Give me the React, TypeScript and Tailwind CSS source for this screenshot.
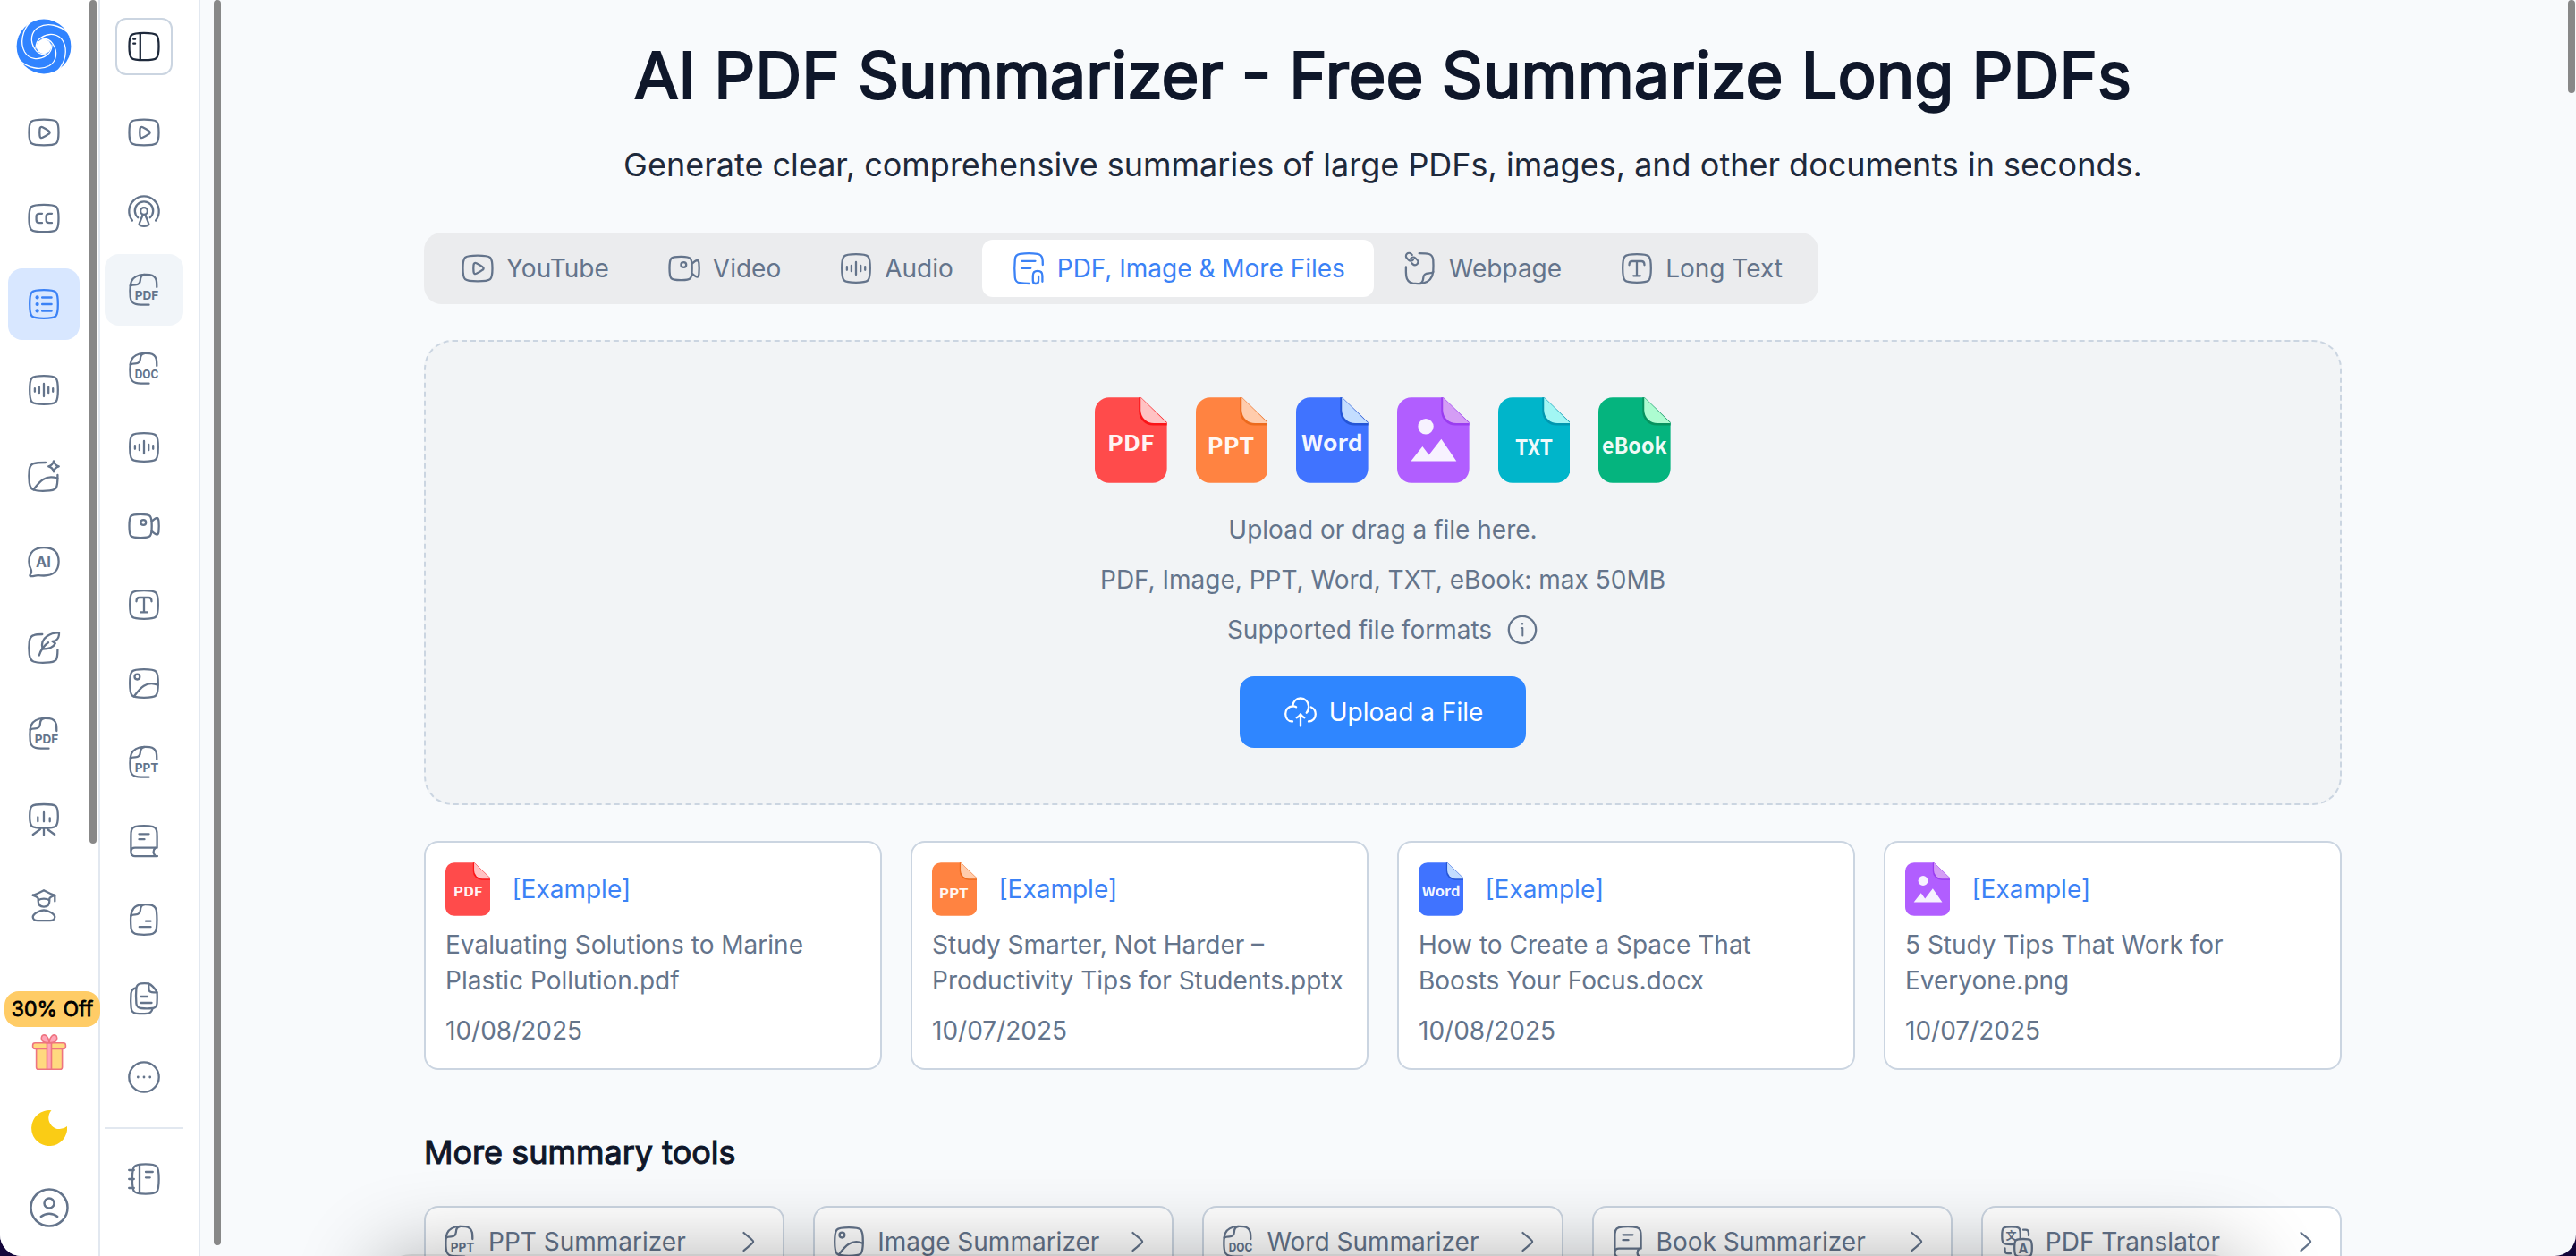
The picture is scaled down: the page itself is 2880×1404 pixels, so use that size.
import type { ReactNode } from 'react';

type IconProps = { className?: string };

// rounded square with softly bulging sides, shared by most of the line icons
const squircle = (l: number, t: number, r: number, b: number) => {
  const mx = (l + r) / 2;
  const my = (t + b) / 2;
  const kx = (r - l) * 0.04;
  const ky = (b - t) * 0.04;
  return `M${l} ${my}C${l} ${t + ky} ${l + kx} ${t} ${mx} ${t}S${r} ${t + ky} ${r} ${my}S${r - kx} ${b} ${mx} ${b}S${l} ${b - ky} ${l} ${my}Z`;
};

function Svg({ className = 'size-10', children }: { className?: string; children: ReactNode }) {
  return (
    <svg
      viewBox="0 0 40 40"
      fill="none"
      stroke="currentColor"
      strokeWidth="2.3"
      strokeLinecap="round"
      strokeLinejoin="round"
      className={`shrink-0 ${className}`}
    >
      {children}
    </svg>
  );
}

function Label({ x, y, size, w, children }: { x: number; y: number; size: number; w: number; children: string }) {
  return (
    <text
      x={x}
      y={y}
      fontSize={size}
      textLength={w}
      lengthAdjust="spacingAndGlyphs"
      stroke="none"
      fill="currentColor"
      className="font-[Inter,sans-serif] font-bold"
    >
      {children}
    </text>
  );
}

const PlayIcon = (p: IconProps) => (
  <Svg {...p}>
    <path d={squircle(3.5, 5.6, 36.5, 34.4)} />
    <path d="M15.5 16.2c.2-2.100 1.400-2.700 3.100-1.900 2.600 1.200 5 2.600 7 4.100 1.400 1 1.400 2.300 0 3.300-2 1.500-4.400 2.900-7 4.100-1.700.8-2.900.1-3.100-1.900-.3-2.500-.3-5.100 0-7.700z" />
  </Svg>
);

const CcIcon = (p: IconProps) => (
  <Svg {...p}>
    <path d={squircle(3.5, 4.8, 36.5, 35.2)} />
    <path d="M18 14.800h-3c-2.200 0-3.400 1.200-3.400 3.400v3.600c0 2.200 1.200 3.400 3.400 3.400h3M29 14.800h-3c-2.200 0-3.400 1.200-3.400 3.400v3.600c0 2.200 1.200 3.400 3.400 3.400h3" />
  </Svg>
);

const ListIcon = (p: IconProps) => (
  <Svg {...p}>
    <path d={squircle(4.2, 4.2, 35.8, 35.8)} />
    <path d="M18.200 12.400H28.500M18.200 20H28.500M18.200 27.400H28.500" strokeWidth="2.5" />
    <g fill="currentColor" stroke="none">
      <circle cx="12.6" cy="12.4" r="2.1" />
      <circle cx="12.6" cy="20" r="2.1" />
      <circle cx="12.6" cy="27.4" r="2.1" />
    </g>
  </Svg>
);

const AudioIcon = (p: IconProps) => (
  <Svg {...p}>
    <path d={squircle(4.2, 4.2, 35.8, 35.8)} />
    <path d="M9.900 18.200v3.600M14.900 16.800v6.400M20 13v14M25.200 16.800v6.400M30.200 18.200v3.600" />
  </Svg>
);

const AiImageIcon = (p: IconProps) => (
  <Svg {...p}>
    <path d="M22 5c-6 0-10.500.1-13.500 1.200C5.500 7.300 4.300 9.500 3.800 13c-.5 4-.5 10.500 0 14.500.5 4.200 1.700 6.800 4.700 8 3 1.100 9 1.400 14 1.200 5-.2 9-.5 11-3 1.900-2.400 2-7.500 1.900-14.700" />
    <path d="M8.500 35.300C14 28 21 17.500 35.300 22.700" />
    <path d="M31 3.300c.8 3.600 2.300 5.200 5.800 6-3.500.8-5 2.400-5.800 6-.8-3.600-2.300-5.200-5.800-6 3.500-.8 5-2.400 5.800-6z" />
  </Svg>
);

const AiChatIcon = (p: IconProps) => (
  <Svg {...p}>
    <path d="M14 35.200c-2.600-.3-5 1.100-8.500.9-1.200-.1-1.400-.9-.8-1.700 1.500-1.900 1.700-4 .8-6.200C4 25.600 3.400 23 3.400 19.800 3.400 9.500 9.500 4.200 20 4.200s16.600 5.300 16.600 15.600c0 10.700-6.600 15.700-16.600 15.700-2.500 0-4.500-.1-6-.3z" />
    <Label x={11} y={26} size={15.5} w={16.8}>AI</Label>
  </Svg>
);

const FeatherIcon = (p: IconProps) => (
  <Svg {...p}>
    <path d="M18.300 5c-4.300 0-7.500.2-9.800 1.200-3 1.100-4.200 3.300-4.700 6.800-.5 4-.5 10.500 0 14.500.5 4.200 1.700 6.800 4.700 8 3 1.100 9 1.400 14 1.200 5-.2 9-.5 11-3 1.500-1.900 1.900-6 1.900-11.500" />
    <path d="M18.600 21.500c-1.700-6 .6-11.300 5.200-14.500C28 4 32.500 3.200 37 3.400c.2 3.700-.8 6.700-3.700 8.500-1.300.8-2.500 1-3.800 1l3.300 2.300c-2.300 4.600-7.500 6.200-14.200 6.300z" />
    <path d="M14.800 28.500c1.900-6 4.700-10.500 10.200-14.300" />
  </Svg>
);

function FileLabelIcon({ label, className }: IconProps & { label: string }) {
  return (
    <Svg className={className}>
      <path d="M34.300 17c0-3.500 0-5.500-.5-7.500-1-4-3.300-6-7.500-6.400-4-.4-8-.3-11.300.4C9 5 5.600 9 4.800 14.500c-.4 3.500-.5 9.500-.1 13.500.5 4.700 2 7 6 7.800 3.500.7 9 .9 14.800.9" />
      <path d="M4.800 15.600c1-1 3-1.200 5.500-1.300 3.700-.1 5.300-1.500 5.500-4.800.2-3.800.9-6.300 4.400-6.500" />
      <Label x={9.8} y={31.4} size={13.8} w={26.5}>{label}</Label>
    </Svg>
  );
}

const PdfIcon = (p: IconProps) => <FileLabelIcon label="PDF" {...p} />;
const DocIcon = (p: IconProps) => <FileLabelIcon label="DOC" {...p} />;
const PptIcon = (p: IconProps) => <FileLabelIcon label="PPT" {...p} />;

const BoardIcon = (p: IconProps) => (
  <Svg {...p}>
    <path d={squircle(4.2, 3, 35.8, 29.7)} />
    <path d="M13.300 17.300v5M20 12v10.300M26.700 18.300v4M16 31l-8.200 6M20 30.500v7M24 31l8.200 6" />
  </Svg>
);

const StudentIcon = (p: IconProps) => (
  <Svg {...p}>
    <path d="M7.700 8.700C12 7.500 16 5.300 20 3.200c4 2.100 8 4.300 12.300 5.500v6.800" />
    <path d="M7.700 8.700c2.300.9 5 1.700 5.800 3.300.4.900.2 2 .2 3 0 4 2.300 6.600 6.300 6.600s6.300-2.600 6.300-6.600c0-1-.2-2.100.2-3 .8-1.600 3.500-2.400 5.800-3.300M13.700 14.200c3.500-2 9.100-2 12.600 0" />
    <path d="M20 25.500c4.500 0 12.300 4 12.300 7.600 0 2.900-3 4.100-5.300 4.100H13c-2.300 0-5.300-1.200-5.300-4.100 0-3.600 7.800-7.600 12.300-7.600z" />
  </Svg>
);

const PanelIcon = (p: IconProps) => (
  <Svg {...p}>
    <path d={squircle(3.5, 4.8, 36.5, 35.2)} />
    <path d="M15.800 5.200v29.600M8.200 11.700h1.900M8.200 16.700h1.900" />
  </Svg>
);

const PodcastIcon = (p: IconProps) => (
  <Svg {...p}>
    <path d="M6.900 30.500a16.700 16.700 0 1 1 26.200 0M13.200 27.200a10.200 10.200 0 1 1 13.600 0" />
    <circle cx="20" cy="20" r="3.9" />
    <path d="M18.300 24.300c-.5 3.300-3 7-3.700 10.500 1.300 2.700 9.500 2.700 10.800 0-.7-3.500-3.200-7.200-3.700-10.500" />
  </Svg>
);

const VideoIcon = (p: IconProps) => (
  <Svg {...p}>
    <path d={squircle(3.5, 6.8, 28.7, 33.2)} />
    <circle cx="19.3" cy="16" r="2.9" />
    <path d="M28.700 14.500c2-1.300 3.400-3.400 5.600-3.500 1.700 0 1.900 1.300 2.100 3.200.4 4 .4 8.100 0 12.100-.2 1.900-.4 3.200-2.100 3.200-2.200-.1-3.600-2.200-5.600-3.500" />
  </Svg>
);

const TextIcon = (p: IconProps) => (
  <Svg {...p}>
    <path d={squircle(4.2, 4.2, 35.8, 35.8)} />
    <path d="M11.500 16.300c0-3 .8-4.300 3.500-4.300h10c2.700 0 3.500 1.300 3.500 4.300M20 12v16.300M16.200 28.300h7.700" />
  </Svg>
);

const ImageIcon = (p: IconProps) => (
  <Svg {...p}>
    <path d={squircle(4.2, 4.2, 35.8, 35.8)} />
    <circle cx="12.4" cy="12.6" r="2.9" />
    <path d="M8.800 34.500C14.500 27 22 16 35.600 21.800" />
  </Svg>
);

const BookIcon = (p: IconProps) => (
  <Svg {...p}>
    <path d="M5.400 32V14.500c0-6 .5-9.200 4.600-10.400 5-1.400 15-1.400 20 0 4.100 1.200 4.600 4.400 4.600 10.400v13.200H10c-2.800 0-4.600 1.900-4.600 4.600 0 3 2 4.800 4.600 4.800h25" />
    <path d="M32.500 28c-2.600 2.200-2.600 6.500.3 8.800M14.500 12.300h11M14.500 18.200h6" />
  </Svg>
);

const ArticleIcon = (p: IconProps) => (
  <Svg {...p}>
    <path d="M5.400 15c.8-6 3.800-10 9.600-11.300 3.500-.8 7.500-.8 11-.4 5 .5 7.500 2.700 8 7.500.6 6 .6 12.500 0 18.500-.5 4.500-2.500 6.600-7 7.100-4.500.5-9.500.5-14 0-4.500-.5-7-2.600-7.500-7.100-.4-4.500-.6-10-.1-14.300z" />
    <path d="M5.400 15.600c1-1 3-1.200 5-1.300 3.700-.1 5.300-1.500 5.500-4.800.2-3.800.9-6 4.400-6.300M22 21.700h5.500M14.800 28.200h12.700" />
  </Svg>
);

const CopiesIcon = (p: IconProps) => (
  <Svg {...p}>
    <path d="M25 3.400c-3-.3-6-.3-8.500 0-3.300.4-4.700 2-5.100 5.400-.5 5.500-.5 11.500 0 17 .4 3.400 1.900 4.800 5.300 5.200 4.200.5 8.800.5 12.900 0 3.400-.4 4.500-1.900 4.900-5.200.3-4 .4-8.300.1-12.500-2-3.600-5.200-8-9.600-9.900z" />
    <path d="M25.300 3.800c-.1 2.500 0 5 .3 6.700.4 1.700 1.300 2.400 3 2.600 1.800.2 3.800.2 5.700.2M16.500 18h7.500M16.500 25h12M11 8.500c-3.700.5-5.100 2-5.500 6-.4 5-.4 11 .1 16 .4 4.300 2 6 6 6.400 4 .4 8 .4 12 0 3-.3 5-1.700 5.900-5.500" />
  </Svg>
);

const MoreIcon = (p: IconProps) => (
  <Svg {...p}>
    <circle cx="20" cy="20" r="16.7" />
    <g fill="currentColor" stroke="none">
      <circle cx="13.3" cy="20" r="1.4" />
      <circle cx="20" cy="20" r="1.4" />
      <circle cx="26.7" cy="20" r="1.4" />
    </g>
  </Svg>
);

const NotebookIcon = (p: IconProps) => (
  <Svg {...p}>
    <path d={squircle(6.9, 3.4, 36.6, 36.6)} />
    <path d="M15 3.800v32.400M3.200 10h5.600M3.200 20h5.600M3.200 30h5.600M22 12h7.800M22 18.300h4.700" />
  </Svg>
);

const AttachIcon = (p: IconProps) => (
  <Svg {...p}>
    <path d="M35.800 16c0-3 0-5-.4-7-.7-3-2.300-4.700-5.400-5.200-6-.9-13.500-.9-19.500 0C7 4.300 5.200 6 4.800 9.500c-.7 7-.7 14 0 21 .4 3.500 2 5.200 5.200 5.700 3.500.6 7 .8 10.600.8M12.500 11.800h15M12.500 19.800h9.800" />
    <path d="M35.400 34.800v-6.600c0-3.300-2-5.300-5.300-5.300s-5.300 2-5.300 5.300v5.200c0 2.200 1 3.600 3.100 3.600s3.200-1.400 3.200-3.600v-4.600" />
  </Svg>
);

const WebpageIcon = (p: IconProps) => (
  <Svg {...p}>
    <path d="M18.700 3.200c4.800 0 8.500.1 11 .8 3.200 1 4.300 3 4.600 6.700.3 4.500.3 9 0 13-.8 7.300-4.800 11.700-11.600 13-3.500.6-7.700.6-11.200 0-4.500-.9-6.700-3.300-7.300-8-.4-3.500-.4-7-.3-10.300" />
    <path d="M34.300 24c-1 1.200-3 1.300-5 1.500-4.300.3-5.700 1.500-6 5-.3 3-.5 5.500-3.300 6.300" />
    <g transform="translate(18.800 1.400) scale(-.68 .68)" strokeWidth="3.2">
      <path d="M10 13a5 5 0 0 0 7.540.540l3-3a5 5 0 0 0-7.070-7.070l-1.720 1.710" />
      <path d="M14 11a5 5 0 0 0-7.540-.540l-3 3a5 5 0 0 0 7.070 7.070l1.710-1.710" />
    </g>
  </Svg>
);

const TranslateIcon = (p: IconProps) => (
  <Svg {...p}>
    <path d={squircle(3.3, 3.3, 23.8, 23)} />
    <path d={squircle(17.2, 17, 36.8, 36.8)} fill="#f8f8f8" />
    <path d="M27 6.700h2.700c2.400 0 3.300 1.100 3.300 3.600V13M6.500 27.500v2.300c0 2.400 1.100 3.400 3.500 3.400h3" />
    <text x="7.6" y="17.6" fontSize="12" stroke="none" fill="currentColor" className="font-['Noto_Sans_CJK_SC',sans-serif] font-bold">
      文
    </text>
    <Label x={21.5} y={33} size={14.5} w={11}>A</Label>
  </Svg>
);

const CloudUploadIcon = (p: IconProps) => (
  <Svg {...p}>
    <path d="M11 30.500c-5 0-7.800-3.800-7.800-8.500 0-4.600 3-8.400 8-8.600.3-5.200 3.900-8.900 8.800-8.900s8.900 3.800 9.100 9c.1 3-.8 5.500-2.400 7.200" />
    <path d="M11.200 13.400c1.400-.1 2.700.2 3.900.9M31.800 14.500c3.200 1.300 5 4 5 7.700 0 4.500-2.800 8.300-7.800 8.300M20 35.500V22.500M15.700 26.300c1.500-.8 3-2.100 4.300-4 1.300 1.900 2.800 3.200 4.300 4" />
  </Svg>
);

const InfoIcon = (p: IconProps) => (
  <Svg {...p}>
    <circle cx="20" cy="20" r="15.2" />
    <path d="M18.800 18h1.500v8.500" strokeWidth="2" />
    <circle cx="20" cy="13.300" r="1.3" fill="currentColor" stroke="none" />
  </Svg>
);

function Logo() {
  const arm = 'M27-15.500C18-24 4-27-6-21.500-14.500-16.500-16-6-10 3-7 7.500-3 9 2 9';
  return (
    <svg viewBox="-31 -31 62 62" className="size-[62px] shrink-0">
      <circle r="30.4" fill="#3083ff" />
      <g fill="none" stroke="#fff" strokeWidth="1.3" strokeLinecap="round">
        <path d={arm} />
        <path d={arm} transform="rotate(90)" />
        <path d={arm} transform="rotate(180)" />
        <path d={arm} transform="rotate(270)" />
      </g>
      <circle r="8.3" fill="#fff" />
    </svg>
  );
}

const Gift = () => (
  <svg viewBox="0 0 40 40" className="size-10" stroke="#ee7480" strokeWidth="1.6" strokeLinejoin="round">
    <rect x="5.6" y="15.5" width="29" height="23.7" rx="2.3" fill="#ffd97f" />
    <rect x="1.6" y="9.8" width="36.8" height="6.6" rx="2.6" fill="#ffd97f" />
    <rect x="17.5" y="9.8" width="5" height="29.4" fill="#ffa6b9" />
    <path d="M20 9.500c-4 .6-8.500-1-8.700-5C11.200 1 14.500-.2 17 2c1.800 1.700 2.700 4.500 3 7.500z" fill="#ffa6b9" />
    <path d="M20 9.500c4 .6 8.500-1 8.700-5C28.800 1 25.500-.2 23 2c-1.800 1.700-2.700 4.500-3 7.500z" fill="#ffa6b9" />
  </svg>
);

type FileKind = 'pdf' | 'ppt' | 'word' | 'image' | 'txt' | 'ebook';

const fileStyles: Record<FileKind, { base: string; fold: string; edge: string; label?: string; x: number; y: number; w: number }> = {
  pdf: { base: '#ff4b4b', fold: '#ffc2c3', edge: '#fb1418', label: 'PDF', x: 14, y: 60.5, w: 53 },
  ppt: { base: '#ff8341', fold: '#ffccac', edge: '#ec6a1d', label: 'PPT', x: 12.5, y: 63.5, w: 53 },
  word: { base: '#4073ff', fold: '#c3ddff', edge: '#2455d6', label: 'Word', x: 6, y: 60.5, w: 69 },
  image: { base: '#b15eff', fold: '#d49df5', edge: '#9a3df0', x: 0, y: 0, w: 0 },
  txt: { base: '#00b5ca', fold: '#a2f6f4', edge: '#0097b0', label: 'TXT', x: 19.2, y: 65, w: 42 },
  ebook: { base: '#05b47e', fold: '#adfcd1', edge: '#07935f', label: 'eBook', x: 4, y: 63.3, w: 73 },
};

function FileBadge({ kind, className }: { kind: FileKind; className: string }) {
  const s = fileStyles[kind];
  return (
    <svg viewBox="0 0 81 96" className={`shrink-0 ${className}`}>
      <path d="M16 0h35l30 29v51a16 16 0 0 1-16 16H16A16 16 0 0 1 0 80V16A16 16 0 0 1 16 0z" fill={s.base} />
      <path d="M49.500 0H52l29 28v3.500H65.500a16 16 0 0 1-16-16z" fill={s.edge} />
      <path d="M51.500 0 81 29H66.500a15 15 0 0 1-15-15z" fill={s.fold} />
      {s.label ? (
        <text
          x={s.x}
          y={s.y}
          fontSize="24"
          fill="#fff"
          fillOpacity=".95"
          textLength={s.w}
          lengthAdjust="spacingAndGlyphs"
          className="font-['Noto_Sans_CJK_SC',sans-serif] font-bold"
        >
          {s.label}
        </text>
      ) : (
        <g fill="#f7f2ff">
          <circle cx="32.2" cy="32.7" r="8.7" />
          <path d="M15.500 71.500 28.500 55l7.200 9.700 13.900-18 17 24.800z" />
        </g>
      )}
    </svg>
  );
}

const mainNav = [PlayIcon, CcIcon, ListIcon, AudioIcon, AiImageIcon, AiChatIcon, FeatherIcon, PdfIcon, BoardIcon, StudentIcon];

const subNav = [
  PlayIcon,
  PodcastIcon,
  PdfIcon,
  DocIcon,
  AudioIcon,
  VideoIcon,
  TextIcon,
  ImageIcon,
  PptIcon,
  BookIcon,
  ArticleIcon,
  CopiesIcon,
  MoreIcon,
];

const tabs = [
  { name: 'YouTube', Icon: PlayIcon },
  { name: 'Video', Icon: VideoIcon },
  { name: 'Audio', Icon: AudioIcon },
  { name: 'PDF, Image & More Files', Icon: AttachIcon, active: true },
  { name: 'Webpage', Icon: WebpageIcon },
  { name: 'Long Text', Icon: TextIcon },
];

const fileKinds: FileKind[] = ['pdf', 'ppt', 'word', 'image', 'txt', 'ebook'];

const examples: { kind: FileKind; title: string; date: string }[] = [
  { kind: 'pdf', title: 'Evaluating Solutions to Marine Plastic Pollution.pdf', date: '10/08/2025' },
  { kind: 'ppt', title: 'Study Smarter, Not Harder – Productivity Tips for Students.pptx', date: '10/07/2025' },
  { kind: 'word', title: 'How to Create a Space That Boosts Your Focus.docx', date: '10/08/2025' },
  { kind: 'image', title: '5 Study Tips That Work for Everyone.png', date: '10/07/2025' },
];

const tools = [
  { name: 'PPT Summarizer', Icon: PptIcon },
  { name: 'Image Summarizer', Icon: ImageIcon },
  { name: 'Word Summarizer', Icon: DocIcon },
  { name: 'Book Summarizer', Icon: BookIcon },
  { name: 'PDF Translator', Icon: TranslateIcon },
];

function MainSidebar() {
  return (
    <aside className="relative flex w-[112px] shrink-0 flex-col border-r-2 border-[#e2e8f0] bg-white">
      <div className="flex w-[98px] justify-center pt-[21px]">
        <Logo />
      </div>
      <nav className="mt-[25px] flex w-[98px] flex-col items-center gap-4">
        {mainNav.map((Icon, i) => (
          <a
            key={i}
            className={i === 2 ? 'flex size-20 items-center justify-center rounded-2xl bg-[#d8e7ff] text-[#3b82f6]' : 'flex size-20 items-center justify-center rounded-2xl'}
          >
            <Icon />
          </a>
        ))}
      </nav>
      <div className="mt-14 flex flex-col items-center">
        <span className="ml-[5px] flex h-10 w-[107px] items-center justify-center self-start rounded-2xl bg-[#ffcc66] text-[23px] text-black [-webkit-text-stroke:0.8px_currentColor]">
          30% Off
        </span>
        <div className="mt-2">
          <Gift />
        </div>
        <svg viewBox="0 0 40 40" className="mt-[45px] size-10">
          <path d="M22.500.2A20 20 0 1 0 40 18 12.500 12.500 0 0 1 22.500.2z" fill="#facc15" />
        </svg>
        <svg viewBox="0 0 44 44" fill="none" stroke="currentColor" strokeWidth="2.5" strokeLinecap="round" className="mt-[47px] size-11">
          <circle cx="22" cy="22" r="20.5" />
          <circle cx="22" cy="17" r="5.5" />
          <path d="M12.800 32c5.500-4.500 12.900-4.500 18.400 0" />
        </svg>
      </div>
      <div className="absolute top-0 left-[100px] h-[943px] w-2 rounded-full bg-[#888]" />
    </aside>
  );
}

function SubSidebar() {
  return (
    <aside className="flex w-[112px] shrink-0 flex-col border-r-2 border-[#e2e8f0] bg-white">
      <button className="mt-5 ml-[17px] flex size-16 items-center justify-center rounded-xl border-2 border-[#cbd5e1] text-[#1e293b]">
        <PanelIcon />
      </button>
      <nav className="mt-6 ml-[5px] flex w-[88px] flex-col gap-2">
        {subNav.map((Icon, i) => (
          <a key={i} className={i === 2 ? 'flex h-20 items-center justify-center rounded-2xl bg-[#f1f5f9]' : 'flex h-20 items-center justify-center rounded-2xl'}>
            <Icon />
          </a>
        ))}
        <hr className="mt-2 border-t-2 border-[#e2e8f0]" />
        <a className="mt-2 flex h-20 items-center justify-center">
          <NotebookIcon />
        </a>
      </nav>
    </aside>
  );
}

function DropZone() {
  return (
    <section className="mt-10 flex h-[520px] flex-col items-center rounded-[32px] border-2 border-dashed border-[#cbd5e1] bg-[#f2f4f6] pt-[62px]">
      <div className="flex gap-8">
        {fileKinds.map((kind) => (
          <FileBadge key={kind} kind={kind} className="h-24 w-[80.64px]" />
        ))}
      </div>
      <div className="mt-6 flex flex-col items-center leading-[56px]">
        <p>Upload or drag a file here.</p>
        <p>PDF, Image, PPT, Word, TXT, eBook: max 50MB</p>
        <p className="flex items-center gap-[14px] pl-[2px]">
          Supported file formats <InfoIcon />
        </p>
      </div>
      <button className="mt-6 flex h-20 items-center gap-3 rounded-2xl bg-[#2f86ff] px-12 text-white">
        <CloudUploadIcon />
        Upload a File
      </button>
    </section>
  );
}

export default function App() {
  return (
    <div className="h-[1404px] w-[2880px] overflow-hidden bg-[#13063a]">
      <div className="relative flex h-full overflow-hidden rounded-b-3xl bg-[#f8fafc] font-[Inter,sans-serif] text-[28px] text-[#64748b]">
        <MainSidebar />
        <SubSidebar />

        <main className="relative flex-1">
          <div className="ml-[250px] w-[2144px]">
            <h1 className="pt-[39px] text-center text-[72px] leading-[90px] text-[#0f172a] [-webkit-text-stroke:2.2px_currentColor]">
              AI PDF Summarizer - Free Summarize Long PDFs
            </h1>
            <p className="mt-[27px] text-center text-4xl leading-[56px] text-[#1e293b]">
              Generate clear, comprehensive summaries of large PDFs, images, and other documents in seconds.
            </p>

            <div className="mt-12 flex h-20 w-fit rounded-[20px] bg-[#ebecee] p-2">
              {tabs.map(({ name, Icon, active }) => (
                <button
                  key={name}
                  className={active ? 'flex h-16 items-center gap-3 rounded-xl bg-white px-8 text-[#3b82f6]' : 'flex h-16 items-center gap-3 rounded-xl px-8'}
                >
                  <Icon />
                  {name}
                </button>
              ))}
            </div>

            <DropZone />

            <div className="mt-10 grid grid-cols-4 gap-8">
              {examples.map((item) => (
                <article key={item.title} className="h-64 rounded-2xl border-2 border-[#cbd5e1] bg-white px-[22px] pt-[22px] leading-10">
                  <div className="flex items-center gap-6">
                    <FileBadge kind={item.kind} className="h-[60px] w-[50.4px]" />
                    <span className="text-[#3b82f6]">[Example]</span>
                  </div>
                  <h3 className="mt-3">{item.title}</h3>
                  <p className="mt-4">{item.date}</p>
                </article>
              ))}
            </div>

            <h2 className="mt-[68px] text-4xl leading-[48px] text-[#0f172a] [-webkit-text-stroke:1.1px_currentColor]">More summary tools</h2>
            <div className="mt-9 grid grid-cols-5 gap-8">
              {tools.map(({ name, Icon }) => (
                <a key={name} className="flex h-20 items-center gap-3 rounded-2xl border-2 border-[#cbd5e1] bg-white pr-[31px] pl-[18px]">
                  <Icon />
                  {name}
                  <svg viewBox="0 0 14 24" fill="none" stroke="currentColor" strokeWidth="2.2" strokeLinecap="round" strokeLinejoin="round" className="ml-auto h-6 w-[14px]">
                    <path d="M1.500 2C4 4.500 8 7.200 11 10.200c1.500 1.400 1.500 2.200 0 3.600C8 16.800 4 19.500 1.500 22" />
                  </svg>
                </a>
              ))}
            </div>
          </div>
          <div className="absolute top-0 left-[15px] h-[1392px] w-2 rounded-full bg-[#888]" />
        </main>

        <div className="absolute top-0 right-px h-[104px] w-2 rounded-full bg-[#888]" />
        {/* soft shade rising from under the window */}
        <div className="absolute top-[1402px] left-[420px] h-[120px] w-[2090px] rounded-[40px] bg-black/20 shadow-[0_0_90px_rgba(0,0,0,0.3)]" />
      </div>
    </div>
  );
}
